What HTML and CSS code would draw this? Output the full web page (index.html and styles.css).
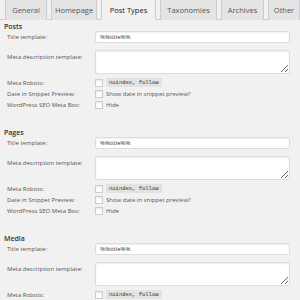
FILE: index.html
```html
<!DOCTYPE html>
<html lang="en">
<head>
<meta charset="UTF-8">
<title>Titles &amp; Metas</title>
<link rel="stylesheet" href="styles.css">
</head>
<body>
<div class="tabs">
  <a class="tab">General</a>
  <a class="tab">Homepage</a>
  <a class="tab active">Post Types</a>
  <a class="tab">Taxonomies</a>
  <a class="tab">Archives</a>
  <a class="tab">Other</a>
</div>

<div class="section">
  <h4>Posts</h4>
  <div class="row"><label>Title template:</label><input type="text" class="field" value="%%title%%"></div>
  <div class="row tall"><label>Meta description template:</label><textarea class="field area"></textarea></div>
  <div class="row check"><label>Meta Robots:</label><span class="box"></span><code>noindex, follow</code></div>
  <div class="row check"><label>Date in Snippet Preview:</label><span class="box"></span><span>Show date in snippet preview?</span></div>
  <div class="row check"><label>WordPress SEO Meta Box:</label><span class="box"></span><span>Hide</span></div>
</div>

<div class="section">
  <h4>Pages</h4>
  <div class="row"><label>Title template:</label><input type="text" class="field" value="%%title%%"></div>
  <div class="row tall"><label>Meta description template:</label><textarea class="field area"></textarea></div>
  <div class="row check"><label>Meta Robots:</label><span class="box"></span><code>noindex, follow</code></div>
  <div class="row check"><label>Date in Snippet Preview:</label><span class="box"></span><span>Show date in snippet preview?</span></div>
  <div class="row check"><label>WordPress SEO Meta Box:</label><span class="box"></span><span>Hide</span></div>
</div>

<div class="section">
  <h4>Media</h4>
  <div class="row"><label>Title template:</label><input type="text" class="field" value="%%title%%"></div>
  <div class="row tall"><label>Meta description template:</label><textarea class="field area"></textarea></div>
  <div class="row check"><label>Meta Robots:</label><span class="box"></span><code>noindex, follow</code></div>
</div>
</body>
</html>
```

FILE: styles.css
```css
body {
  margin: 0;
  background: #f1f1f1;
  font-family: 'Open Sans', sans-serif;
  font-size: 6px;
  color: #555;
  overflow: hidden;
}

.tabs {
  display: flex;
  gap: 4px;
  padding: 0 0 0 5px;
  height: 20px;
  border-bottom: 1px solid #ccc;
  box-sizing: border-box;
  white-space: nowrap;
}
.tab {
  display: flex;
  align-items: center;
  justify-content: center;
  flex-shrink: 0;
  box-sizing: border-box;
  background: #e4e4e4;
  border: 1px solid #ccc;
  border-top: none;
  border-bottom: none;
  color: #555;
  font-size: 7.5px;
  margin-bottom: -1px;
}
.tab:nth-child(1) { width: 42px; }
.tab:nth-child(2) { width: 46px; }
.tab:nth-child(3) { width: 55px; }
.tab:nth-child(4) { width: 57px; }
.tab:nth-child(5) { width: 43px; }
.tab:nth-child(6) { width: 32px; }
.tab.active {
  background: #f1f1f1;
  color: #222;
  border-bottom: 1px solid #f1f1f1;
}

.section {
  padding: 0 10px 0 4px;
  margin-bottom: 19px;
}
.section h4 {
  margin: 3px 0 0;
  font-size: 7px;
  font-weight: 600;
  color: #333;
  line-height: 8px;
}

.row {
  display: flex;
  align-items: center;
  min-height: 11px;
}
.row label {
  width: 88px;
  padding-left: 3px;
  flex-shrink: 0;
}
.row.tall {
  align-items: flex-start;
  margin-top: 7px;
}
.row.tall label {
  padding-top: 3px;
}

.field {
  flex: 1;
  height: 12px;
  box-sizing: border-box;
  border: 1px solid #ddd;
  background: #fff;
  font-family: 'Open Sans', sans-serif;
  font-size: 6px;
  color: #333;
  padding: 0 4px;
  border-radius: 2px;
  box-shadow: inset 0 1px 2px rgba(0,0,0,0.07);
}
.field.area {
  height: 24px;
  margin: 0 0 3px;
  resize: vertical;
}

.box {
  width: 8px;
  height: 8px;
  border: 1px solid #ccc;
  background: #fff;
  box-sizing: border-box;
  margin-right: 3px;
  box-shadow: inset 0 1px 2px rgba(0,0,0,0.1);
}
code {
  background: #e2e2e2;
  padding: 1px 3px;
  font-family: 'Liberation Mono', monospace;
  font-size: 5.5px;
  color: #333;
}
```
